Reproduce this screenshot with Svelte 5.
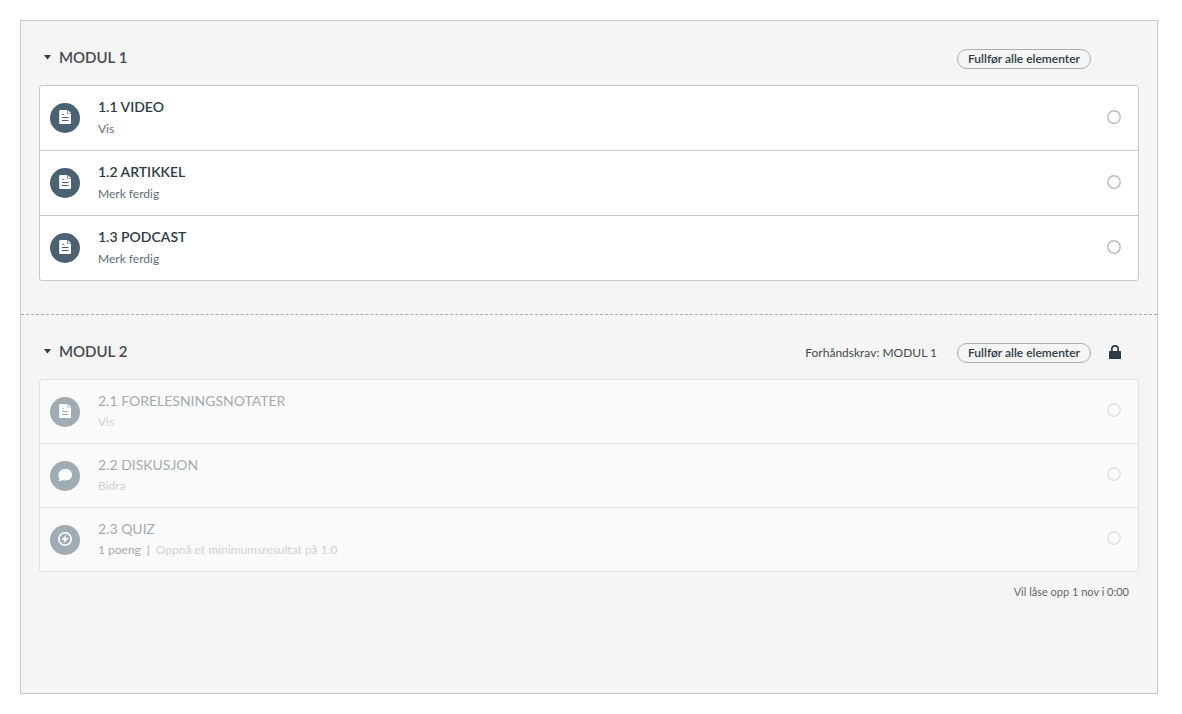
<script lang="ts">
  interface Item {
    title: string
    requirement: string
    icon: 'page' | 'discussion' | 'quiz'
    points?: string
  }

  interface Module {
    id: number
    name: string
    locked: boolean
    prerequisite?: string
    unlocks?: string
    items: Item[]
  }

  const modules: Module[] = [
    {
      id: 1,
      name: 'MODUL 1',
      locked: false,
      items: [
        { title: '1.1 VIDEO', requirement: 'Vis', icon: 'page' },
        { title: '1.2 ARTIKKEL', requirement: 'Merk ferdig', icon: 'page' },
        { title: '1.3 PODCAST', requirement: 'Merk ferdig', icon: 'page' },
      ],
    },
    {
      id: 2,
      name: 'MODUL 2',
      locked: true,
      prerequisite: 'Forhåndskrav: MODUL 1',
      unlocks: 'Vil låse opp 1 nov i 0:00',
      items: [
        { title: '2.1 FORELESNINGSNOTATER', requirement: 'Vis', icon: 'page' },
        { title: '2.2 DISKUSJON', requirement: 'Bidra', icon: 'discussion' },
        {
          title: '2.3 QUIZ',
          requirement: 'Oppnå et minimumsresultat på 1.0',
          icon: 'quiz',
          points: '1 poeng',
        },
      ],
    },
  ]

  let collapsed: Record<number, boolean> = $state({})
</script>

<main>
  {#each modules as module (module.id)}
    <section class:locked={module.locked}>
      <header>
        <h2>
          <button
            class="toggle"
            aria-expanded={!collapsed[module.id]}
            onclick={() => (collapsed[module.id] = !collapsed[module.id])}
          >
            <svg class="arrow" class:closed={collapsed[module.id]} viewBox="0 0 7 7" aria-hidden="true">
              <path d="M0 2h7L3.500 6.600z" />
            </svg>
            {module.name}
          </button>
        </h2>
        {#if module.prerequisite}
          <span class="prerequisite">{module.prerequisite}</span>
        {/if}
        <span class="pill">Fullfør alle elementer</span>
        <span class="status">
          {#if module.locked}
            <svg viewBox="0 0 12 14" aria-hidden="true">
              <path
                fill-rule="evenodd"
                d="M2 6V4a4 4 0 0 1 8 0v2h1.300q.7 0 .7.700v6.600q0 .7-.7.700H.700Q0 14 0 13.300V6.700Q0 6 .700 6zM3.700 6h4.600V4a2.300 2.300 0 0 0-4.600 0z"
              />
            </svg>
          {/if}
        </span>
      </header>

      {#if !collapsed[module.id]}
        <ul>
          {#each module.items as item (item.title)}
            <li>
              <span class="icon">
                <svg viewBox="0 0 14 14" aria-hidden="true">
                  {#if item.icon === 'page'}
                    <path
                      fill-rule="evenodd"
                      d="M2.200 0H9v3.600h4V13q0 1-1 1H2.200q-1 0-1-1V1q0-1 1-1zM4 4v.800h2.200V4zM4 7v1.100h6.500V7zM4 10v1.100h6.500V10z"
                    />
                    <path d="M9.700.100L12.900 3.100H9.700z" />
                  {:else if item.icon === 'discussion'}
                    <path d="M7.500 1C11.500 1 14 3.300 14 6.800S11.500 12.500 7.500 12.500c-1.200 0-2.200-.2-3-.6-1 .8-2.500 1.100-4.200 1 .8-.7 1.200-1.500 1.200-2.500C.700 9.400.500 8 .500 6.800.500 3.300 3.500 1 7.500 1z" />
                  {:else}
                    <circle cx="7" cy="7" r="6.200" class="ring" />
                    <path d="M8.500 2.500L3.300 8h2.900l-.8 3.500L10.900 6H7.700z" />
                  {/if}
                </svg>
              </span>
              <div class="text">
                {#if module.locked}
                  <span class="title">{item.title}</span>
                {:else}
                  <a class="title" href="#{item.title}">{item.title}</a>
                {/if}
                <div class="details">
                  {#if item.points}
                    <span class="points">{item.points}</span>
                    <span class="points">|</span>
                  {/if}
                  <span>{item.requirement}</span>
                </div>
              </div>
              <svg class="circle" viewBox="0 0 14 14" aria-hidden="true">
                <circle cx="7" cy="7" r="6.200" />
              </svg>
            </li>
          {/each}
        </ul>
      {/if}

      {#if module.unlocks}
        <footer>{module.unlocks}</footer>
      {/if}
    </section>
  {/each}
</main>

<style>
  main {
    box-sizing: border-box;
    min-height: calc(100vh - 40px);
    margin: 20px 24px 20px 20px;
    border: 1px solid #c7cacc;
    background: #f5f5f5;
    color: #2d3b45;
    font-family: Lato, sans-serif;
    font-size: 12px;
  }

  section {
    padding: 0 18px 33px;
  }

  section + section {
    border-top: 1px dashed #aaa;
  }

  header {
    display: flex;
    align-items: center;
    height: 64px;
    padding-top: 11px;
    box-sizing: border-box;
  }

  h2 {
    flex: 1;
    margin: 0;
    padding-bottom: 4px;
    font-size: 15px;
  }

  .toggle {
    display: flex;
    align-items: center;
    gap: 8px;
    padding: 0 5px;
    border: 0;
    background: none;
    color: #444a50;
    font: 600 15px/20px Lato, sans-serif;
    cursor: pointer;
  }

  .arrow {
    width: 7px;
    height: 7px;
    fill: #2d3b45;
  }

  .closed {
    transform: rotate(-90deg);
  }

  .prerequisite {
    margin-right: 20px;
    color: #444a50;
  }

  .pill {
    padding: 0 10px;
    border: 1px solid #aaadaf;
    border-radius: 10px;
    font-weight: 600;
    line-height: 18px;
  }

  .status {
    display: flex;
    justify-content: center;
    width: 48px;
    padding-bottom: 2px;
  }

  .status svg {
    width: 12px;
    height: 14px;
    fill: #2d3b45;
  }

  ul {
    margin: 0;
    padding: 0;
    border: 1px solid #c7cacc;
    border-radius: 3px;
    background: #fff;
    list-style: none;
  }

  li {
    display: flex;
    align-items: center;
    height: 64px;
    padding: 0 17px 0 10px;
  }

  li + li {
    border-top: 1px solid #c7cacc;
  }

  .icon {
    display: flex;
    align-items: center;
    justify-content: center;
    box-sizing: border-box;
    width: 30px;
    height: 30px;
    margin-right: 18px;
    padding-bottom: 2px;
    border-radius: 50%;
    background: #4b6272;
  }

  .icon svg {
    width: 14px;
    height: 14px;
    fill: #fff;
  }

  .icon .ring {
    fill: none;
    stroke: #fff;
    stroke-width: 1.6;
  }

  .text {
    flex: 1;
  }

  .title {
    display: block;
    color: #2d3b45;
    font-size: 14px;
    font-weight: 600;
    line-height: 22px;
    text-decoration: none;
  }

  .details {
    display: flex;
    gap: 6px;
    color: #5e6b78;
    line-height: 22px;
  }

  .circle {
    width: 14px;
    height: 14px;
    margin-bottom: 2px;
    fill: none;
    stroke: #b5babf;
    stroke-width: 1.4;
  }

  .locked ul {
    border-color: #dfe1e2;
    background: #fafafa;
  }

  .locked li {
    height: 63px;
    border-color: #dfe1e2;
  }

  .locked .icon {
    background: #a0acb3;
  }

  .locked .title {
    color: #a3acb2;
    font-weight: 400;
  }

  .locked .details {
    padding-bottom: 2px;
    color: #cfd1d3;
    line-height: 20px;
  }

  .locked .points {
    color: #a3acb2;
  }

  .locked .circle {
    margin-bottom: 4px;
    stroke: #dcdfe2;
  }

  footer {
    padding: 10px 10px 0;
    color: #666;
    font-size: 11px;
    line-height: 20px;
    text-align: right;
  }
</style>
